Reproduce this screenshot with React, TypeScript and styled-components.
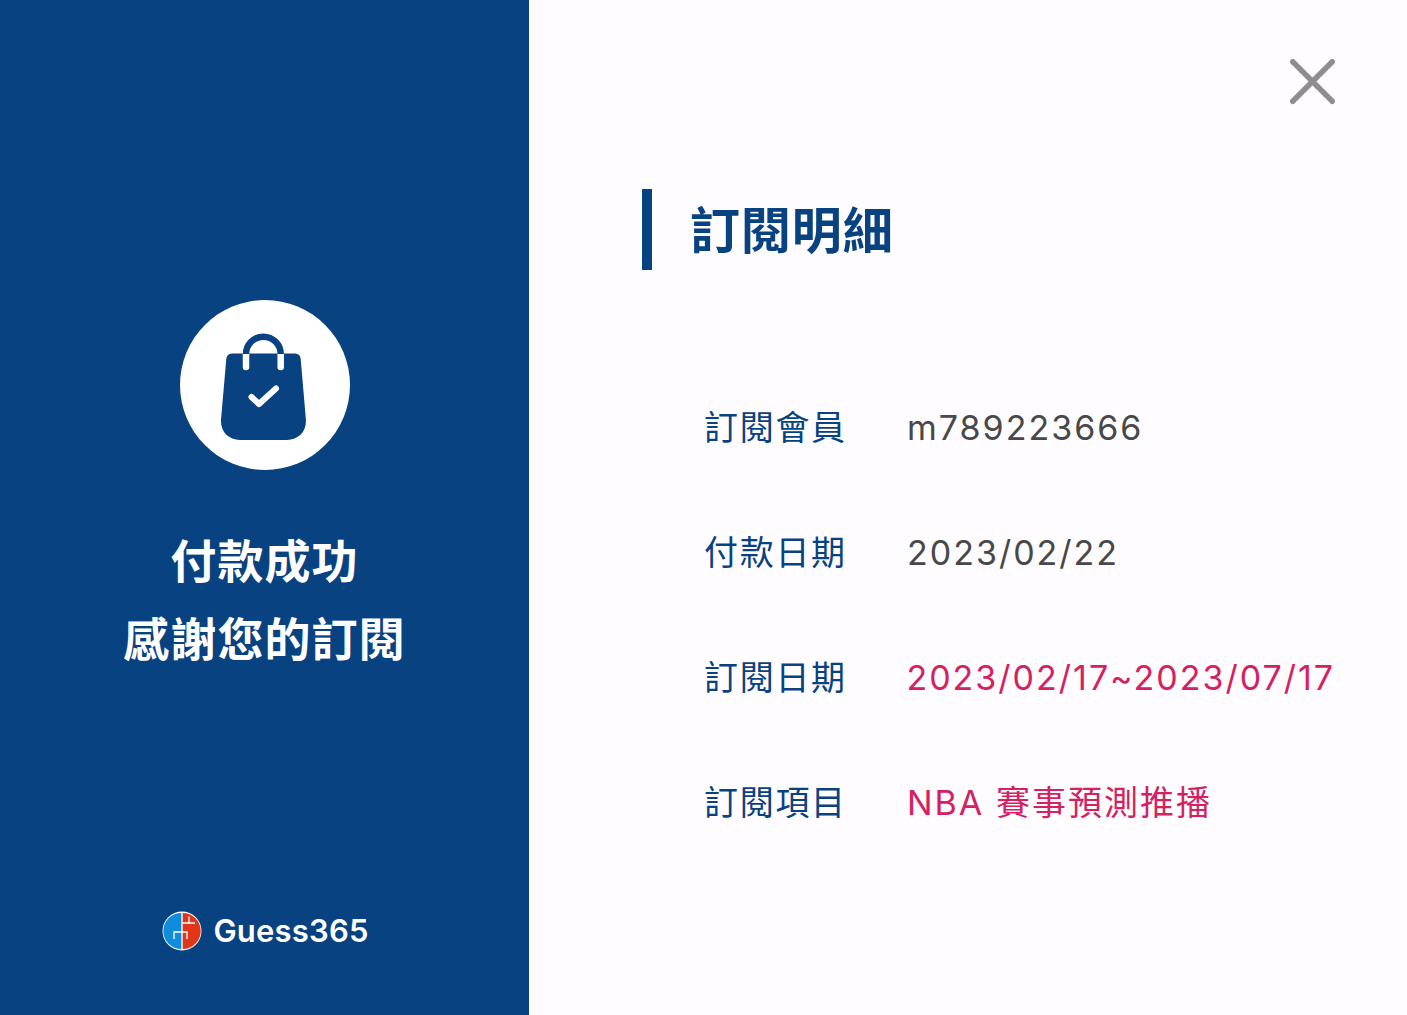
import React from "react";
import styled, { createGlobalStyle } from "styled-components";

const Global = createGlobalStyle`
  html, body { margin: 0; padding: 0; height: 100%; background: #fefcff; }
  #root { height: 100%; }
  * { box-sizing: border-box; }
`;

const FONT = `Inter, "Noto Sans CJK TC", sans-serif`;

const Page = styled.div`
  display: grid;
  grid-template-columns: 529px minmax(0, 1fr);
  width: 1407px;
  height: 1015px;
  overflow: hidden;
  font-family: ${FONT};
`;

const Side = styled.aside`
  background: #084280;
  display: flex;
  flex-direction: column;
  align-items: center;
  padding-top: 300px;
`;

const Badge = styled.div`
  width: 170px;
  height: 170px;
  border-radius: 50%;
  background: #fff;
  display: flex;
  align-items: center;
  justify-content: center;
`;

const Message = styled.h1`
  margin: 52px 0 0;
  color: #fff;
  font-size: 46px;
  font-weight: 700;
  line-height: 78px;
  letter-spacing: 1.1px;
  text-align: center;
`;

const Brand = styled.div`
  margin-top: auto;
  margin-bottom: 64px;
  margin-left: 2px;
  display: flex;
  align-items: center;
  gap: 11px;
`;

const BrandName = styled.span`
  color: #fff;
  font-family: Inter, sans-serif;
  font-size: 31px;
  font-weight: 600;
  line-height: 40px;
  letter-spacing: 0.2px;
`;

const Main = styled.main`
  min-width: 0;
  background: #fefcff;
  display: flex;
  flex-direction: column;
  padding: 59px 72px 0 113px;
`;

const Close = styled.button`
  align-self: flex-end;
  width: 46px;
  height: 46px;
  padding: 0;
  border: 0;
  background: none;
  display: block;
`;

const Title = styled.h2`
  margin: 84px 0 0;
  height: 81px;
  border-left: 10px solid #084280;
  padding-left: 38px;
  color: #084280;
  font-size: 50px;
  font-weight: 700;
  line-height: 85px;
  letter-spacing: 0.9px;
`;

const Rows = styled.dl`
  margin: 95px 0 0 62px;
  display: flex;
  flex-direction: column;
`;

const Row = styled.div`
  height: 125px;
  display: flex;
  align-items: center;
  white-space: nowrap;
`;

const Label = styled.dt`
  width: 203px;
  color: #084280;
  font-size: 34px;
  line-height: 40px;
  letter-spacing: 1.7px;
`;

const Value = styled.dd<{ $accent?: boolean }>`
  margin: 0;
  color: ${(p) => (p.$accent ? "#d3225f" : "#484848")};
  font-size: 34px;
  line-height: 40px;
  letter-spacing: 2px;
`;

const rows = [
  { label: "訂閱會員", value: "m789223666" },
  { label: "付款日期", value: "2023/02/22" },
  { label: "訂閱日期", value: "2023/02/17~2023/07/17", accent: true },
  { label: "訂閱項目", value: "NBA 賽事預測推播", accent: true },
];

const BagIcon = () => (
  <svg width="170" height="170" viewBox="0 0 170 170" aria-hidden="true">
    <path
      d="M52 53.500h63a6 6 0 0 1 5.700 5.500l5.200 60.500c.8 12-7.400 20.500-19 20.500H60c-11.600 0-19.800-8.500-19-20.500l5.300-60.500a6 6 0 0 1 5.700-5.500z"
      fill="#084280"
    />
    <path d="M66 67V53" fill="none" stroke="#fff" strokeWidth="6.500" strokeLinecap="round" />
    <path d="M100.700 67V53" fill="none" stroke="#fff" strokeWidth="6.500" strokeLinecap="round" />
    <path d="M66 54a17.350 17.350 0 0 1 34.700 0" fill="none" stroke="#084280" strokeWidth="6.500" strokeLinecap="butt" />
    <path d="M71.500 97l7.500 7 17-15.500" fill="none" stroke="#fff" strokeWidth="6" strokeLinecap="round" strokeLinejoin="round" />
  </svg>
);

const LogoMark = () => (
  <svg width="40" height="40" viewBox="0 0 40 40" aria-hidden="true">
    <circle cx="20" cy="20" r="19.500" fill="#fff" />
    <path d="M19.300 2A18 18 0 0 0 19.300 38z" fill="#0f8ddb" />
    <path d="M20.700 2A18 18 0 0 1 20.700 38z" fill="#e0371b" />
    <path d="M12 28v-7h13v7" fill="none" stroke="#fff" strokeWidth="1.300" />
    <path d="M20.700 12H33M27 5.500V12" fill="none" stroke="#fff" strokeWidth="1.300" />
  </svg>
);

const CloseIcon = () => (
  <svg width="46" height="46" viewBox="0 0 46 46" aria-hidden="true">
    <path d="M3.750 2.750l39.500 39.500M43.250 2.750L3.750 42.250" stroke="#8e8e8e" strokeWidth="5.500" strokeLinecap="round" />
  </svg>
);

export default function App() {
  return (
    <Page>
      <Global />
      <Side>
        <Badge>
          <BagIcon />
        </Badge>
        <Message>
          付款成功
          <br />
          感謝您的訂閱
        </Message>
        <Brand>
          <LogoMark />
          <BrandName>Guess365</BrandName>
        </Brand>
      </Side>
      <Main>
        <Close aria-label="關閉">
          <CloseIcon />
        </Close>
        <Title>訂閱明細</Title>
        <Rows>
          {rows.map((r) => (
            <Row key={r.label}>
              <Label>{r.label}</Label>
              <Value $accent={r.accent}>{r.value}</Value>
            </Row>
          ))}
        </Rows>
      </Main>
    </Page>
  );
}
